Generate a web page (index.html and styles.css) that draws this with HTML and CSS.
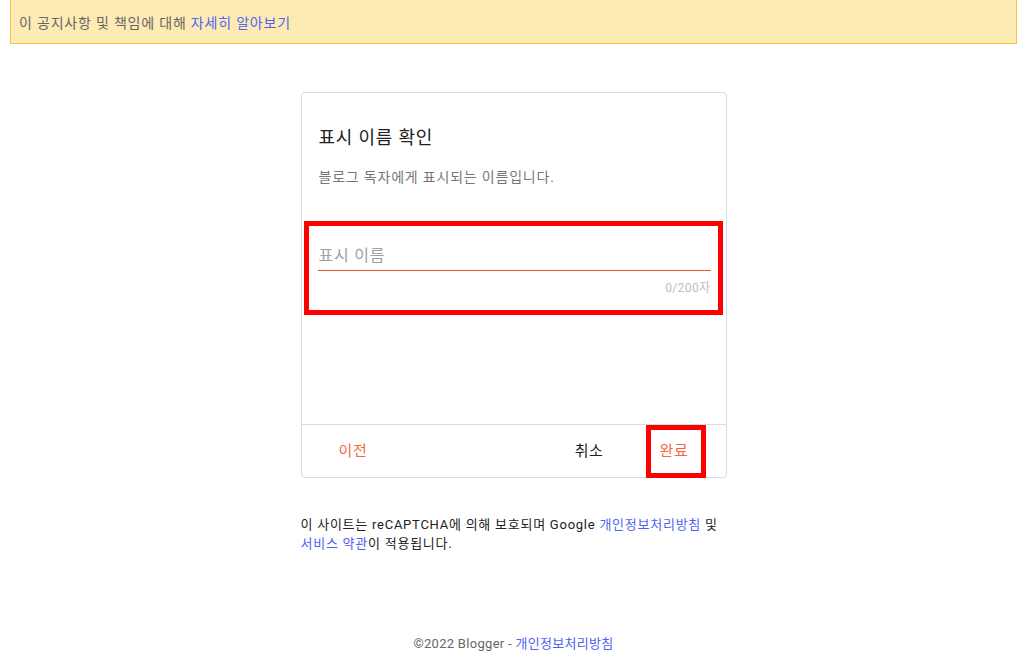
FILE: index.html
```html
<!DOCTYPE html>
<html lang="ko">
<head>
    <meta charset="UTF-8">
    <meta name="viewport" content="width=device-width, initial-scale=1.0">
    <title>표시 이름 확인 - Blogger</title>
    <link rel="stylesheet" href="styles.css">
</head>
<body>
    <div class="notice">
        <span>이 공지사항 및 책임에 대해 <a href="#">자세히 알아보기</a></span>
    </div>

    <main class="wrap">
        <section class="card">
            <div class="card-body">
                <h1>표시 이름 확인</h1>
                <p class="desc">블로그 독자에게 표시되는 이름입니다.</p>

                <div class="field mark">
                    <input type="text" class="field-input" placeholder="표시 이름">
                    <div class="counter">0/200자</div>
                </div>
            </div>
            <div class="card-actions">
                <button class="btn btn-accent btn-prev">이전</button>
                <span class="spacer"></span>
                <button class="btn btn-cancel">취소</button>
                <button class="btn btn-accent btn-done">완료</button>
            </div>
        </section>

        <p class="legal">
            이 사이트는 reCAPTCHA에 의해 보호되며 Google <a href="#">개인정보처리방침</a> 및
            <a href="#">서비스 약관</a>이 적용됩니다.
        </p>
    </main>

    <footer>
        ©2022 Blogger - <a href="#">개인정보처리방침</a>
    </footer>
</body>
</html>
```

FILE: styles.css
```css
:root {
    --accent-color: #f4683b;
    --line-color: #e9552b;
    --link-color: #4f62f2;
    --text-color: #212121;
    --muted-color: #777;
    --border-color: #d6dce1;
    --notice-bg: #feebb4;
    --notice-border: #f7c53d;
    --mark-color: #ff0000;
}

* {
    margin: 0;
    padding: 0;
    box-sizing: border-box;
}

body {
    font-family: Roboto, "Noto Sans CJK KR", sans-serif;
    color: var(--text-color);
    background: #fff;
    height: 663px;
    display: flex;
    flex-direction: column;
    letter-spacing: 0.8px;
}

a {
    color: var(--link-color);
    text-decoration: none;
}

.notice {
    margin: 0 10px;
    height: 44px;
    padding: 0 8px;
    display: flex;
    align-items: center;
    background: var(--notice-bg);
    border: 1px solid var(--notice-border);
    border-top: none;
    font-size: 14px;
    color: #666;
}

.wrap {
    width: 426px;
    margin: 48px auto 0;
}

.card {
    border: 1px solid var(--border-color);
    border-radius: 4px;
}

.card-body {
    height: 331px;
    padding: 33px 16px 0 16px;
}

h1 {
    padding-left: 1px;
    font-size: 18px;
    font-weight: 400;
    line-height: 24px;
}

.desc {
    margin-top: 17px;
    padding-left: 1px;
    font-size: 14px;
    line-height: 20px;
    color: var(--muted-color);
}

.mark {
    border: 5px solid var(--mark-color);
}

.field {
    margin: 34px -13px 0 -14px;
    padding: 17px 7px 14px 9px;
}

.field-input {
    display: block;
    width: 100%;
    height: 28px;
    padding: 0 0 3px 1px;
    border: 0;
    border-bottom: 1px solid #e9552b;
    outline: none;
    font-family: inherit;
    font-size: 16px;
    letter-spacing: 0.8px;
    color: var(--text-color);
    background: transparent;
}

.field-input::placeholder {
    color: #a0a0a0;
}

.counter {
    margin-top: 9px;
    text-align: right;
    font-size: 12px;
    line-height: 16px;
    color: #bdbdbd;
    letter-spacing: 0.4px;
}

.card-actions {
    display: flex;
    align-items: stretch;
    height: 53px;
    border-top: 1px solid var(--border-color);
    padding-right: 20px;
}

.spacer {
    flex: 1;
}

.btn {
    border: none;
    background: none;
    font-family: inherit;
    font-size: 15px;
    letter-spacing: 0.6px;
    padding-bottom: 4px;
    cursor: pointer;
}

.btn-accent {
    color: var(--accent-color);
}

.btn-prev {
    padding-left: 37px;
    padding-right: 16px;
}

.btn-cancel {
    padding-left: 16px;
    padding-right: 16px;
    margin-right: 26px;
    color: var(--text-color);
}

.btn-done {
    width: 60px;
    margin-bottom: -1px;
    padding-left: 0;
    padding-right: 3px;
    border: 5px solid var(--mark-color);
}

.legal {
    margin-top: 37px;
    font-size: 13px;
    line-height: 19px;
    letter-spacing: 0.75px;
    color: var(--text-color);
}

footer {
    margin-top: auto;
    padding-bottom: 11px;
    text-align: center;
    font-size: 13px;
    letter-spacing: 0.3px;
    color: #666;
}
```
